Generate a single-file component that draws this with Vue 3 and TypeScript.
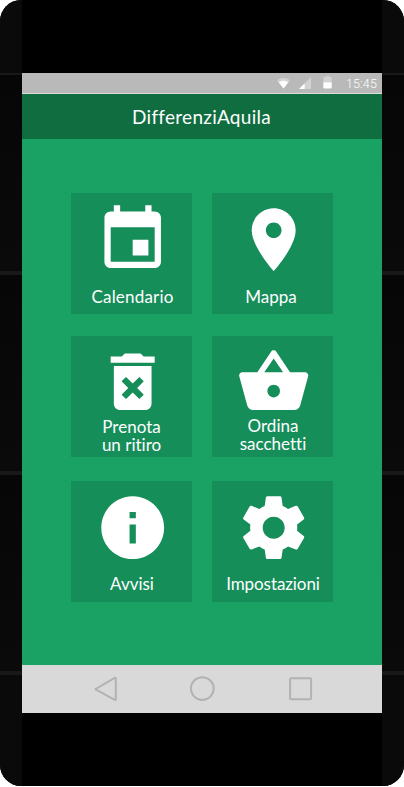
<script setup lang="ts">
interface Tile {
  id: string
  label: string
  path: string
}

const tiles: Tile[] = [
  {
    id: 'calendario',
    label: 'Calendario',
    path: 'M17 12h-5v5h5v-5zM16 1v2H8V1H6v2H5c-1.11 0-1.99.9-1.99 2L3 19c0 1.1.89 2 2 2h14c1.1 0 2-.9 2-2V5c0-1.1-.9-2-2-2h-1V1h-2zm3 18H5V8h14v11z',
  },
  {
    id: 'mappa',
    label: 'Mappa',
    path: 'M12 2C8.13 2 5 5.13 5 9c0 5.25 7 13 7 13s7-7.75 7-13c0-3.87-3.13-7-7-7zm0 9.5c-1.38 0-2.5-1.12-2.5-2.5s1.12-2.5 2.5-2.5 2.5 1.12 2.5 2.5-1.12 2.5-2.5 2.5z',
  },
  {
    id: 'ritiro',
    label: 'Prenota\nun ritiro',
    path: 'M6 19c0 1.1.9 2 2 2h8c1.1 0 2-.9 2-2V7H6v12zm2.46-7.12l1.41-1.41L12 12.59l2.12-2.12 1.41 1.41L13.41 14l2.12 2.12-1.41 1.41L12 15.41l-2.12 2.12-1.41-1.41L10.59 14l-2.13-2.12zM15.5 4l-1-1h-5l-1 1H5v2h14V4z',
  },
  {
    id: 'sacchetti',
    label: 'Ordina\nsacchetti',
    path: 'M17.21 9l-4.38-6.56c-.19-.28-.51-.42-.83-.42-.32 0-.64.14-.83.43L6.79 9H2c-.55 0-1 .45-1 1 0 .09.01.18.04.27l2.54 9.27c.23.84 1 1.46 1.92 1.46h13c.92 0 1.69-.62 1.93-1.46l2.54-9.27L23 10c0-.55-.45-1-1-1h-4.79zM9 9l3-4.4L15 9H9zm3 8c-1.1 0-2-.9-2-2s.9-2 2-2 2 .9 2 2-.9 2-2 2z',
  },
  {
    id: 'avvisi',
    label: 'Avvisi',
    path: 'M12 2C6.48 2 2 6.48 2 12s4.48 10 10 10 10-4.48 10-10S17.52 2 12 2zm1 15h-2v-6h2v6zm0-8h-2V7h2v2z',
  },
  {
    id: 'impostazioni',
    label: 'Impostazioni',
    path: 'M19.43 12.98c.04-.32.07-.64.07-.98s-.03-.66-.07-.98l2.11-1.65c.19-.15.24-.42.12-.64l-2-3.46c-.12-.22-.39-.3-.61-.22l-2.49 1c-.52-.4-1.08-.73-1.69-.98l-.38-2.65C14.46 2.18 14.25 2 14 2h-4c-.25 0-.46.18-.49.42l-.38 2.65c-.61.25-1.17.59-1.69.98l-2.49-1c-.23-.09-.49 0-.61.22l-2 3.46c-.13.22-.07.49.12.64l2.11 1.65c-.04.32-.07.65-.07.98s.03.66.07.98l-2.11 1.65c-.19.15-.24.42-.12.64l2 3.46c.12.22.39.3.61.22l2.49-1c.52.4 1.08.73 1.69.98l.38 2.65c.03.24.24.42.49.42h4c.25 0 .46-.18.49-.42l.38-2.65c.61-.25 1.17-.59 1.69-.98l2.49 1c.23.09.49 0 .61-.22l2-3.46c.12-.22.07-.49-.12-.64l-2.11-1.65zM12 15.5c-1.93 0-3.5-1.57-3.5-3.5s1.57-3.5 3.5-3.5 3.5 1.57 3.5 3.5-1.57 3.5-3.5 3.5z',
  },
]
</script>

<template>
  <div class="device">
    <div class="rail"><i class="seam thin"></i><i class="seam"></i><i class="seam"></i><i class="seam"></i></div>
    <main class="screen">
      <div class="status">
        <svg class="wifi" viewBox="0 0 13 12">
          <path d="M.2 3.4C3.6.3 9.4.3 12.8 3.4L6.5 11.6z" fill="#d2d2d2" />
          <path d="M1.7 5.2C4.4 3.1 8.6 3.1 11.3 5.2L6.5 11.6z" fill="#fff" />
        </svg>
        <svg class="signal" viewBox="0 0 12 12">
          <path d="M12 0V12H0z" fill="#d2d2d2" />
          <path d="M5.6 6.4V12H0z" fill="#fff" />
        </svg>
        <svg class="battery" viewBox="0 0 9 13">
          <path d="M3 0h3v1h1.8q.9 0 .9 1v4.5H.3V2q0-1 .9-1H3z" fill="#d2d2d2" />
          <path d="M.3 6.3h8.4v5.1q0 1-.9 1H1.2q-.9 0-.9-1z" fill="#fff" />
        </svg>
        <span class="time">15:45</span>
      </div>
      <header class="title"><h1>DifferenziAquila</h1></header>
      <section class="grid">
        <button v-for="tile in tiles" :key="tile.id" class="tile" :class="tile.id" type="button">
          <svg class="icon" viewBox="0 0 24 24"><path :d="tile.path" /></svg>
          <span class="label">{{ tile.label }}</span>
        </button>
      </section>
      <nav class="nav">
        <svg viewBox="0 0 26 26"><path d="M3.6 13 22.8 1.8Q23.8 1.4 23.8 2.4V23.2Q23.8 24.2 22.8 23.8L3.6 13.4Q3 13.2 3.6 13z" /></svg>
        <svg viewBox="0 0 26 26"><circle cx="12.3" cy="12.6" r="11.4" /></svg>
        <svg viewBox="0 0 26 26"><rect x="2.1" y="2.3" width="21" height="21" rx="1" /></svg>
      </nav>
    </main>
    <div class="rail"><i class="seam thin"></i><i class="seam"></i><i class="seam"></i><i class="seam"></i></div>
  </div>
</template>

<style>
body {
  background: #fff;
}
</style>

<style scoped>
.device {
  display: grid;
  grid-template-columns: 22px 360px 22px;
  width: 404px;
  height: 786px;
  margin-bottom: 1px;
  overflow: hidden;
  border-radius: 21px;
  background: #000;
  font-family: Lato, sans-serif;
}
.rail {
  display: flex;
  flex-direction: column;
  gap: 196px;
  padding-top: 73px;
  background: linear-gradient(#0a0a0a 73px, #060606 75px, #0a0a0a 271px, #060606 275px, #0a0a0a 471px, #060606 475px, #0a0a0a 671px);
}
.seam {
  height: 4px;
  flex: none;
  background: #181818;
}
.seam.thin {
  height: 2px;
}
.screen {
  display: flex;
  flex-direction: column;
  padding: 73px 0;
  box-sizing: border-box;
  height: 786px;
}
.status {
  display: flex;
  align-items: flex-start;
  box-sizing: border-box;
  height: 21px;
  flex: none;
  padding: 3px 5px 0 254.5px;
  border-bottom: 1px solid #dcdcdc;
  background: #b9b9b9;
}
.status svg {
  flex: none;
}
.wifi {
  width: 13px;
  height: 12px;
  margin-top: 1px;
}
.signal {
  width: 12px;
  height: 12px;
  margin: 1px 0 0 9.5px;
}
.battery {
  width: 9px;
  height: 13px;
  margin-left: 12px;
}
.time {
  margin-left: auto;
  font: 300 12.5px/16px Roboto, sans-serif;
  letter-spacing: 0.15px;
  color: #fff;
}
.title {
  display: flex;
  align-items: center;
  justify-content: center;
  height: 45px;
  flex: none;
  background: #0f6d40;
}
h1 {
  margin: 0 1px 0 0;
  font-size: 19px;
  font-weight: 400;
  line-height: 24px;
  letter-spacing: 0.28px;
  color: #fff;
}
.grid {
  display: grid;
  grid-template-columns: 121px 121px;
  grid-template-rows: 121px 121px 121px;
  gap: 23px 20px;
  box-sizing: border-box;
  height: 526px;
  flex: none;
  padding: 54px 49px 0;
  background: #1aa265;
}
.tile {
  display: flex;
  flex-direction: column;
  align-items: center;
  box-sizing: border-box;
  width: 121px;
  height: 121px;
  margin: 0;
  padding: 8.6px 0 0;
  border: 0;
  background: #168e5a;
  color: #fff;
  font: 400 17px/18px Lato, sans-serif;
  font-variant-ligatures: none;
}
.ritiro,
.sacchetti {
  margin-top: -1px;
  padding-top: 7.6px;
}
.icon {
  display: block;
  width: 75.4px;
  height: 75.4px;
  flex: none;
  margin-left: 1.5px;
  fill: #fff;
}
.label {
  margin: 11.2px 0 0 2px;
  text-align: center;
  white-space: pre;
}
.calendario .label {
  letter-spacing: 0.2px;
}
.mappa .label {
  margin-left: -3px;
}
.ritiro .label {
  margin: -0.8px 0 0;
}
.sacchetti .label {
  margin: -1.8px 0 0 1px;
}
.avvisi .label,
.impostazioni .label {
  margin: 10.2px 0 0 1px;
}
.impostazioni .label {
  letter-spacing: -0.08px;
}
.nav {
  display: flex;
  align-items: center;
  gap: 71.8px;
  box-sizing: border-box;
  height: 48px;
  flex: none;
  padding-left: 70.2px;
  background: #d9d9d9;
}
.nav svg {
  width: 26px;
  height: 26px;
  flex: none;
  fill: none;
  stroke: #b2b2b2;
  stroke-width: 2;
  stroke-linejoin: round;
}
</style>
